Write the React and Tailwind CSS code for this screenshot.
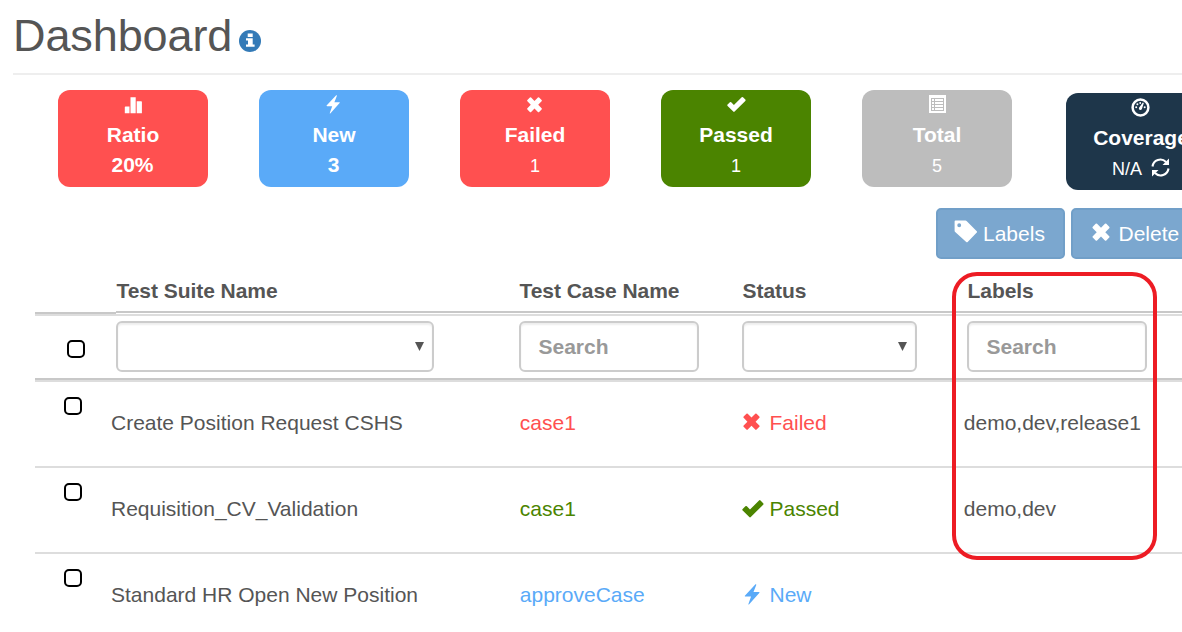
import React from "react";

const paths = {
  bars: <path d="M1.500 11.500h4.000v6.700H.8v-6q0-.7.7-.7zM6.500 2.300h5.200v15.900H6.500zM12.700 6.300h4.500q.7 0 .7.700v11.200h-5.200z" />,
  bolt: <path d="M12.200.3c.5-.3.9 0 .7.500L10.400 7.200h4.800c.6 0 .8.500.4.900L6.500 18.300c-.5.500-.9.300-.7-.3L8.200 11.200H3.200c-.7 0-.9-.500-.4-.9z" />,
  remove: <path d="M4.900 1.600a.8.8 0 0 1 1.200 0L9.500 5l3.400-3.400a.8.8 0 0 1 1.200 0l2.500 2.500a.8.8 0 0 1 0 1.200L13.200 8.800l3.400 3.400a.8.8 0 0 1 0 1.200l-2.500 2.500a.8.8 0 0 1-1.200 0L9.500 12.500l-3.400 3.400a.8.8 0 0 1-1.200 0l-2.500-2.500a.8.8 0 0 1 0-1.200L5.800 8.800 2.400 5.300a.8.8 0 0 1 0-1.200z" />,
  check: <path d="M14.700 1.300q.7-.7 1.300 0l2.300 2.300q.7.7 0 1.300L7.600 15.600q-.7.700-1.300 0L.6 9.900q-.7-.7 0-1.300l2.300-2.300q.7-.7 1.300 0l2.700 2.800z" />,
  list: (
    <>
      <path fillRule="evenodd" d="M1 0h17v18H1zM3 3v13h13V3z" />
      <path d="M4 4h2v2H4zM7 4h8v2H7zM4 7h2v2H4zM7 7h8v2H7zM4 10h2v2H4zM7 10h8v2H7zM4 13h2v2H4zM7 13h8v2H7z" />
    </>
  ),
  gauge: (
    <>
      <circle cx="9.500" cy="9.500" r="7.900" fill="none" stroke="currentColor" strokeWidth="2.500" />
      <path d="M8 9.700l3.900-5.100.9.500-2 6.100q-1.300 1.300-2.500.2-.7-.8-.3-1.700z" />
      <circle cx="5.200" cy="9.200" r="1" />
      <circle cx="6.400" cy="6.300" r="1" />
      <circle cx="9.200" cy="5" r=".9" />
      <circle cx="13.700" cy="9.200" r="1" />
    </>
  ),
  refresh: (
    <>
      <path fill="none" stroke="currentColor" strokeWidth="2.100" d="M1.500 8.500A7.900 7.900 0 0 1 15 4M17.500 10.500A7.900 7.900 0 0 1 4 15" />
      <path d="M18 .6v6.500h-6.500zM1 18.400v-6.500h6.500z" />
    </>
  ),
  tag: <path fillRule="evenodd" d="M.5 1.300q0-.8.800-.8h8.100q.7 0 1.200.5l8.200 8.200q.6.600 0 1.200l-7.500 7.700q-.6.600-1.200 0L1 10q-.5-.5-.5-1.200zM4.300 2.700a1.600 1.600 0 1 0 0 3.200 1.600 1.600 0 0 0 0-3.200z" />,
};

function Icon({ name, className }) {
  return (
    <svg viewBox="0 0 19 19" fill="currentColor" className={`shrink-0 ${className}`} aria-hidden="true">
      {paths[name]}
    </svg>
  );
}

function Card({ icon, iconClass, title, value, color, bold, className = "", children }) {
  return (
    <div className={`flex h-[97px] w-[150px] shrink-0 flex-col items-center rounded-xl text-[21px] leading-[30px] text-white ${color} ${className}`}>
      <div className="flex h-[30px]">
        <Icon name={icon} className={`h-[19px] w-[19px] ${iconClass}`} />
      </div>
      <div className="font-bold">{title}</div>
      <div className={bold ? "-ml-px font-bold" : "flex items-center pt-px text-[18px]"}>
        {value}
        {children}
      </div>
    </div>
  );
}

function ToolButton({ icon, children, className }) {
  return (
    <button className={`flex h-[51px] shrink-0 items-center rounded-[5px] border-2 border-[#719fc8] bg-[#7ba7cf] pl-4 text-[21px] text-white ${className}`}>
      {icon}
      <span>{children}</span>
    </button>
  );
}

function Box({ className = "" }) {
  return <span className={`block h-[18px] w-[18px] rounded-[5px] border-2 border-black bg-white ${className}`} />;
}

const field = "flex h-[51px] items-center rounded-md border-2 border-[#ccc] bg-white shadow-[inset_0_2px_2px_rgba(0,0,0,0.07)]";

function SelectField({ className }) {
  return (
    <div className={`${field} justify-end ${className}`}>
      <svg viewBox="0 0 9 9" className="mr-2 h-[9px] w-[9px] fill-[#555]"><path d="M0 0h9L4.500 9z" /></svg>
    </div>
  );
}

function SearchField() {
  return <div className={`${field} w-[180px] pl-[17.500px] text-[21px] font-bold text-[#999]`}>Search</div>;
}

const columns = "grid grid-cols-[81px_403px_223px_225px_215px]";

const rows = [
  { suite: "Create Position Request CSHS", name: "case1", status: "Failed", icon: "remove", color: "text-[#ff5050]", labels: "demo,dev,release1", iconClass: "h-[21px] w-[21px] -ml-[1px] mr-[7.500px] mb-[1px]" },
  { suite: "Requisition_CV_Validation", name: "case1", status: "Passed", icon: "check", color: "text-[#4b8400]", labels: "demo,dev", iconClass: "h-[22px] w-[22px] mr-[5.500px] mt-[1px]" },
  { suite: "Standard HR Open New Position", name: "approveCase", status: "New", icon: "bolt", color: "text-[#5aaaf8]", labels: "", iconClass: "h-[21px] w-[21px] -ml-[0.500px] mr-[7px] mb-[2px]" },
];

export default function App() {
  return (
    <main className="relative h-[632px] w-[1182px] overflow-hidden bg-white font-['Liberation_Sans',Arial,sans-serif] text-[#555]">
      <header className="ml-[13px] flex h-[75px] border-b-2 border-[#eee]">
        <h1 className="w-[220px] pt-[11px] text-[45px] leading-[50px] tracking-[-0.100px]">Dashboard</h1>
        <svg viewBox="0 0 22 22" className="mt-[29.500px] ml-[6px] h-[22px] w-[22px]" aria-label="info">
          <circle cx="11" cy="11" r="11" fill="#337ab7" />
          <path fill="#fff" d="M8.700 3.500h5v3.400h-5zM7 8.200h6.700v6.200h1.900v2.400H7v-2.400h2v-3.800H7z" />
        </svg>
      </header>

      <section className="flex gap-[51px] pt-[15px] pl-[58px]">
        <Card icon="bars" iconClass="mt-[5px] ml-px" title="Ratio" value="20%" color="bg-[#ff5050]" bold />
        <Card icon="bolt" iconClass="mt-[5px] mr-px" title="New" value="3" color="bg-[#5aaaf8]" bold />
        <Card icon="remove" iconClass="mt-[5.500px] mr-px" title="Failed" value="1" color="bg-[#ff5050]" />
        <Card icon="check" iconClass="mt-[6px] ml-px" title="Passed" value="1" color="bg-[#4b8400]" />
        <Card icon="list" iconClass="mt-[5px] ml-px" title="Total" value="5" color="bg-[#bdbdbd]" />
        <Card icon="gauge" iconClass="mt-[4.500px] mr-px" title="Coverage" value="N/A" color="bg-[#1e364a]" className="mt-[3px] ml-[3px]">
          <Icon name="refresh" className="mt-[-4px] ml-[9px] h-[19px] w-[19px]" />
        </Card>
      </section>

      <section className="flex gap-[6px] pt-[18px] pl-[936px]">
        <ToolButton className="w-[129px]" icon={<Icon name="tag" className="mr-[6px] mb-[4px] h-[23px] w-[23px]" />}>Labels</ToolButton>
        <ToolButton className="w-[128px]" icon={<Icon name="remove" className="mr-[7px] mb-[2px] ml-[0.500px] h-[22px] w-[22px]" />}>Delete</ToolButton>
      </section>

      <section className="ml-[35px] w-[1147px]">
        <div className={`${columns} h-[57px] border-b-2 border-[#ddd] text-[21px] font-bold`}>
          <div className="border-b-2 border-[#c8c8c8]" />
          {["Test Suite Name", "Test Case Name", "Status", "Labels"].map((title) => (
            <div key={title} className="mb-px border-b-2 border-[#c8c8c8] pt-[17px] pl-[0.500px] leading-[30px] tracking-[-0.050px]">{title}</div>
          ))}
        </div>
        <div className={`${columns} h-[64px] border-b-2 border-[#c8c8c8] pt-[5px]`}>
          <Box className="mt-[19px] ml-8" />
          <SelectField className="w-[318px]" />
          <SearchField />
          <SelectField className="w-[175px]" />
          <SearchField />
        </div>
        <div className="border-t-2 border-[#ddd]">
          {rows.map((row) => (
            <div key={row.suite} className={`${columns} h-[86px] border-b-2 border-[#ddd] text-[21px] leading-[82px]`}>
              <Box className="mt-[15px] ml-[29px]" />
              <div className="-ml-[5px]">{row.suite}</div>
              <div className={`pl-[0.800px] ${row.color}`}>{row.name}</div>
              <div className={`flex h-[82px] items-center ${row.color}`}>
                <Icon name={row.icon} className={row.iconClass} />
                <span>{row.status}</span>
              </div>
              <div className="-ml-[3.200px]">{row.labels}</div>
            </div>
          ))}
        </div>
      </section>

      <div className="pointer-events-none absolute top-[272px] left-[952px] h-[288px] w-[205px] rounded-[25px] border-4 border-[#ed1c24]" />
    </main>
  );
}
